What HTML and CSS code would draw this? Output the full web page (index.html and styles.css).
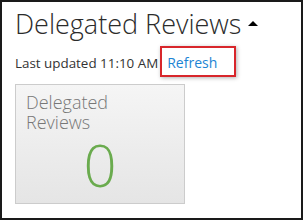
FILE: index.html
```html
<!DOCTYPE html>
<html>
<head>
<meta charset="utf-8">
<link rel="stylesheet" href="styles.css">
</head>
<body>
<div class="frame">
  <div class="header">
    <h1 class="title">Delegated Reviews</h1>
    <span class="caret"></span>
  </div>
  <div class="status">
    <span class="updated">Last updated 11:10 AM</span>
    <a class="refresh" href="#">Refresh</a>
  </div>
  <div class="tile">
    <div class="tile-label">Delegated<br>Reviews</div>
    <div class="tile-count">0</div>
  </div>
</div>
</body>
</html>
```
FILE: styles.css
```css
html, body {
  margin: 0;
  padding: 0;
  background: #fff;
}
body {
  font-family: "Open Sans", "Liberation Sans", sans-serif;
}
.frame {
  box-sizing: border-box;
  width: 303px;
  height: 220px;
  border: 2px solid #1a1a1a;
  padding: 6px 13px 0 13px;
  display: flex;
  flex-direction: column;
  align-items: flex-start;
}
.header {
  display: flex;
  align-items: center;
  height: 32px;
}
.title {
  margin: 0;
  font-size: 27px;
  line-height: 32px;
  font-weight: 350;
  color: #2b2b2b;
}
.caret {
  width: 0;
  height: 0;
  border-left: 5px solid transparent;
  border-right: 5px solid transparent;
  border-bottom: 5px solid #000;
  margin-left: 7px;
  margin-top: -2px;
}
.status {
  margin-top: 13px;
  display: flex;
  align-items: baseline;
  line-height: 20px;
  color: #333;
}
.updated {
  font-size: 13.4px;
}
.refresh {
  position: relative;
  margin-left: 9px;
  font-size: 14px;
  color: #1c84d4;
  text-decoration: none;
}
.refresh::after {
  content: "";
  position: absolute;
  left: -7px;
  top: -7px;
  width: 72px;
  height: 27px;
  border: 2px solid #d8262b;
  box-shadow: 1px 1px 4px rgba(0,0,0,0.3);
}
.tile {
  box-sizing: border-box;
  margin-top: 11px;
  width: 170px;
  height: 120px;
  border: 1px solid #cccccc;
  background: linear-gradient(#f5f5f5, #e5e5e5);
  padding: 7px 10px 0 10px;
  display: flex;
  flex-direction: column;
}
.tile-label {
  font-size: 18px;
  line-height: 20px;
  font-weight: 300;
  color: #777;
}
.tile-count {
  margin-top: 4px;
  font-size: 58px;
  line-height: 58px;
  font-weight: 300;
  color: #6aab4e;
  text-align: center;
}
```
